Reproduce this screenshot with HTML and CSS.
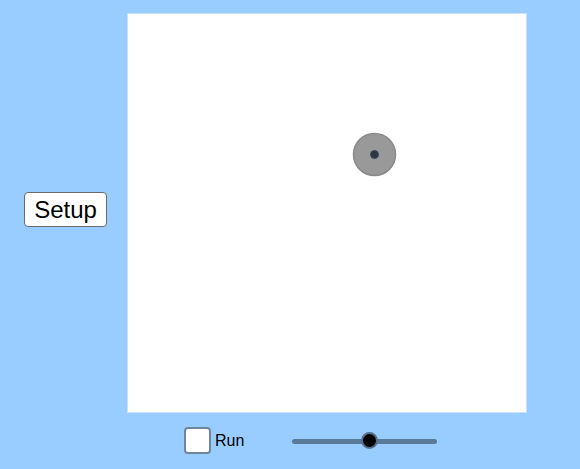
FILE: index.html
```html
<!DOCTYPE html>
<html>
<head>
<meta charset="utf-8">
<link rel="stylesheet" href="styles.css">
</head>
<body>
<div class="app">
  <div class="main">
    <div class="side">
      <button class="setup">Setup</button>
    </div>
    <div class="canvas">
      <svg width="398" height="398" viewBox="1 1 398 398">
        <circle cx="247.5" cy="141.5" r="21" fill="#999999" stroke="#8a8a8a" stroke-width="1.5"/>
        <circle cx="247.5" cy="141.5" r="4" fill="#2e3440" stroke="#3b4a5c" stroke-width="1"/>
      </svg>
    </div>
  </div>
  <div class="controls">
    <label class="run"><span class="box"></span><span class="label">Run</span></label>
    <div class="slider">
      <div class="track"></div>
      <div class="thumb" style="left: 77px"></div>
    </div>
  </div>
</div>
</body>
</html>
```
FILE: styles.css
```css
html, body {
  margin: 0;
  padding: 0;
  background: #99ccff;
  font-family: "Liberation Sans", Arial, sans-serif;
}
.app {
  padding-top: 13px;
  width: 580px;
  height: 469px;
  box-sizing: border-box;
}
.main {
  display: flex;
  align-items: center;
}
.side {
  width: 127px;
  display: flex;
  align-items: center;
}
.setup {
  margin-left: 24px;
  margin-top: -7px;
  width: 83px;
  height: 35px;
  padding: 0;
  font-family: "Liberation Sans", Arial, sans-serif;
  font-size: 24px;
  color: #000;
  background: #fff;
  border: 1px solid #6b6b6b;
  border-radius: 4px;
  line-height: 33px;
}
.canvas {
  width: 398px;
  height: 398px;
  background: #fff;
  border: 1px solid #c6e2ff;
}
.canvas svg {
  display: block;
}
.controls {
  display: flex;
  align-items: center;
  margin-top: 13px;
  padding-left: 184px;
  height: 28px;
}
.run {
  display: flex;
  align-items: center;
}
.box {
  width: 23px;
  height: 23px;
  background: #fff;
  border: 2px solid #6f86a0;
  border-radius: 4px;
}
.label {
  margin-left: 4px;
  margin-top: 1px;
  font-size: 16px;
  color: #000;
}
.slider {
  position: relative;
  margin-left: 48px;
  width: 145px;
  height: 20px;
  margin-top: 2px;
}
.track {
  position: absolute;
  left: 0;
  right: 0;
  top: 8px;
  height: 5px;
  border-radius: 3px;
  background: #5a7a99;
}
.thumb {
  position: absolute;
  top: 1px;
  width: 13px;
  height: 13px;
  margin-left: -8.5px;
  border-radius: 50%;
  background: #000;
  border: 2px solid #56708c;
}
```
